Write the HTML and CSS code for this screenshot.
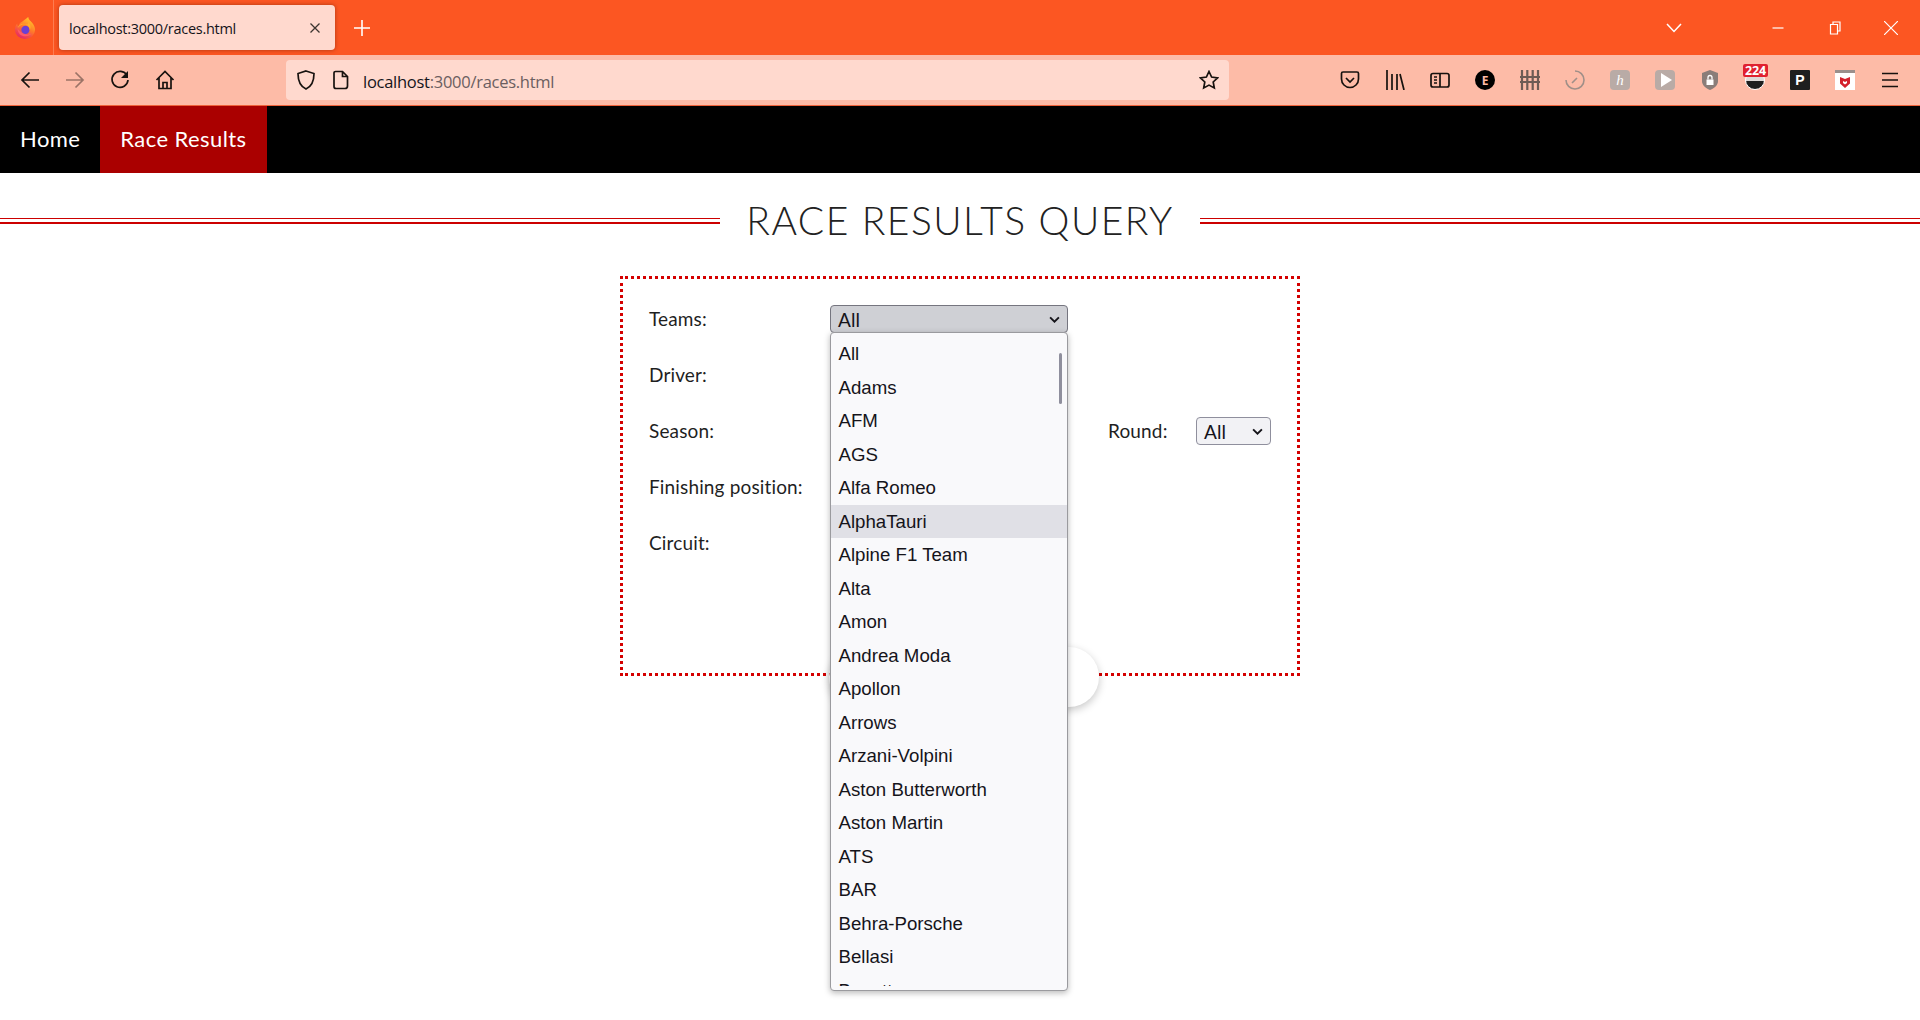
FILE: index.html
```html
<!DOCTYPE html>
<html lang="en">
<head>
<meta charset="utf-8">
<title>Race Results Query</title>
<link rel="stylesheet" href="styles.css">
</head>
<body>
<header class="browser">
  <div class="tabstrip">
    <div class="ff-box">
      <svg class="ff-logo" viewBox="0 0 24 24" width="22" height="22"><defs><linearGradient id="ffg" x1=".8" y1="0" x2=".3" y2="1"><stop offset="0" stop-color="#ffd02a"/><stop offset=".5" stop-color="#ff7a2a"/><stop offset="1" stop-color="#e5236a"/></linearGradient></defs><path d="M15.500 0c.3 3 2.500 4 4.500 6.500 2 2.500 3 5 3 7.500a11 10 0 1 1-22 0c0-3 1-5.500 2.500-7 0 1.500.5 2.500 1.500 3 .5-4 5-5 10.500-10z" fill="url(#ffg)"/><circle cx="12.500" cy="14" r="4.500" fill="#6b3fd4"/><path d="M4 12c1-3 4-5 7-4.500 4 .5 6.500 3.500 6 7 2-3 1-7-2-9 1 2 .5 3-1 2.500-3-1-7 0-10 4z" fill="#ffb02a"/><path d="M4 13c0 5 4 8 8.500 8 3 0 5-1 6.500-3-3 1.500-7 1.500-10-.5-2-1.500-3.500-3-5-4.500z" fill="#ff5a6a"/></svg>
    </div>
    <div class="tab">
      <span class="tab-title">localhost:3000/races.html</span>
      <svg class="tab-close" viewBox="0 0 12 12" width="12" height="12"><path d="M1.500 1.500l9 9M10.500 1.500l-9 9"/></svg>
    </div>
    <svg class="newtab" viewBox="0 0 16 16" width="16" height="16"><path d="M8 0v16M0 8h16"/></svg>
    <div class="window-controls">
      <svg class="win tabs-list" viewBox="0 0 16 10" width="16" height="10"><path d="M1 1l7 7.500L15 1"/></svg>
      <svg class="win minimize" viewBox="0 0 12 12" width="12" height="12"><path d="M.5 6h11"/></svg>
      <svg class="win restore" viewBox="0 0 12 14" width="12" height="14"><path d="M4 3V1h7v9H8.500M1.500 3.500h7v9.500h-7z"/></svg>
      <svg class="win close" viewBox="0 0 14 14" width="14" height="14"><path d="M0 0l14 14M14 0L0 14"/></svg>
    </div>
  </div>

  <div class="toolbar">
    <div class="btn-group">
      <span class="tool"><svg class="ico" viewBox="0 0 20 20"><path d="M19 10H2M9.500 2.500L2 10l7.500 7.500"/></svg></span>
      <span class="tool dim"><svg class="ico" viewBox="0 0 20 20"><path d="M1 10h17M10.500 2.500L18 10l-7.500 7.500"/></svg></span>
      <span class="tool"><svg class="ico" viewBox="0 0 20 20"><path d="M17 5.500A8 8 0 1 0 18 10"/><path class="fill" d="M18 1v7h-7z"/></svg></span>
      <span class="tool"><svg class="ico" viewBox="0 0 20 20"><path d="M1.500 10L10 1.500 18.500 10M4 8v10.500h12V8M8 18.500V12.500h4v6"/></svg></span>
    </div>
    <div class="urlbar">
      <svg class="ico shield" viewBox="0 0 20 20"><path d="M10 1l8 2.500c0 8-2.500 13-8 15.500C4.500 16.500 2 11.500 2 3.500z"/></svg>
      <svg class="ico doc" viewBox="0 0 20 20"><path d="M4.500 1.500h7l5 5V16a2.500 2.500 0 0 1-2.500 2.500H5A2 2 0 0 1 3 16.500V3a1.500 1.500 0 0 1 1.500-1.500zM11.500 1.500v5h5"/></svg>
      <span class="url"><span class="host">localhost</span>:3000/races.html</span>
      <svg class="ico star" viewBox="0 0 20 20"><path d="M10 1.500l2.600 5.500 6 .8-4.400 4.200 1.100 6L10 15.100 4.700 18l1.100-6L1.400 7.800l6-.8z"/></svg>
    </div>
    <div class="btn-group extensions">
      <span class="tool"><svg class="ico" viewBox="0 0 20 20"><path d="M3 2h14a1.500 1.500 0 0 1 1.500 1.500V9a8.500 8.500 0 0 1-17 0V3.500A1.500 1.500 0 0 1 3 2zM6 8l4 4 4-4"/></svg></span>
      <span class="tool"><svg class="ico" viewBox="0 0 20 20"><path d="M2 0v20M7 4v16M12 4v16M15 4l4 16"/></svg></span>
      <span class="tool"><svg class="ico" viewBox="0 0 20 20"><rect x="1" y="3.500" width="18" height="13.500" rx="2"/><path d="M10 3.500V17M4 7h3M4 10h3M4 13h3"/></svg></span>
      <span class="tool"><span class="ext-e">E</span></span>
      <span class="tool"><svg class="ico fence" viewBox="0 0 20 20"><path d="M2 0v20M7.300 0v20M12.700 0v20M18 0v20M0 7h20M0 12h20"/></svg></span>
      <span class="tool"><svg class="ico timer" viewBox="0 0 20 20"><path d="M10 1a9 9 0 1 1-9 9M7 13l5-5"/></svg></span>
      <span class="tool"><span class="ext-k">h</span></span>
      <span class="tool"><span class="ext-play"><svg viewBox="0 0 12 14" width="12" height="14"><path d="M1 0l11 7-11 7z"/></svg></span></span>
      <span class="tool"><svg viewBox="0 0 20 20" width="20" height="20"><path class="lock-shield" d="M10 0l8 3v8c0 4-3 7-8 9-5-2-8-5-8-9V3z"/><path class="lock-body" d="M6.500 9.500h7V15h-7z"/><path class="lock-arc" d="M8 9.500V7.500a2 2 0 0 1 4 0v2"/></svg></span>
      <span class="tool"><span class="ext-count"><span class="badge">224</span></span></span>
      <span class="tool"><span class="ext-p">P</span></span>
      <span class="tool"><span class="ext-mc"><svg viewBox="0 0 12 12" width="12" height="12"><path d="M1 1l5 2 5-2v6.500L6 12 1 7.500z"/><path class="mc-cut" d="M4 5l2 1 2-1v2L6 8.500 4 7z"/></svg></span></span>
      <span class="tool"><svg class="ico" viewBox="0 0 20 20"><path d="M2 3.500h16M2 10h16M2 16.500h16"/></svg></span>
    </div>
  </div>
</header>

<nav class="sitenav">
  <a class="navlink" href="#">Home</a>
  <a class="navlink active" href="#">Race Results</a>
</nav>

<main>
  <div class="title-row">
    <span class="rule"></span>
    <h1>RACE RESULTS QUERY</h1>
    <span class="rule"></span>
  </div>

  <form class="query">
    <div class="row">
      <span class="label">Teams:</span>
      <div class="select-wrap">
        <div class="select open">All<svg class="chev" viewBox="0 0 10 6" width="11" height="7"><path d="M1 1l4 4 4-4"/></svg></div>
        <div class="dropdown">
          <ul class="options">
            <li>All</li><li>Adams</li><li>AFM</li><li>AGS</li><li>Alfa Romeo</li>
            <li class="hover">AlphaTauri</li><li>Alpine F1 Team</li><li>Alta</li><li>Amon</li>
            <li>Andrea Moda</li><li>Apollon</li><li>Arrows</li><li>Arzani-Volpini</li>
            <li>Aston Butterworth</li><li>Aston Martin</li><li>ATS</li><li>BAR</li>
            <li>Behra-Porsche</li><li>Bellasi</li><li>Benetton</li>
          </ul>
          <span class="thumb"></span>
        </div>
      </div>
    </div>
    <div class="row"><span class="label">Driver:</span></div>
    <div class="row">
      <span class="label">Season:</span>
      <span class="select-gap"></span>
      <span class="label-round">Round:</span>
      <div class="select small">All<svg class="chev" viewBox="0 0 10 6" width="11" height="7"><path d="M1 1l4 4 4-4"/></svg></div>
    </div>
    <div class="row"><span class="label">Finishing position:</span></div>
    <div class="row"><span class="label">Circuit:</span></div>
    <span class="submit"></span>
  </form>
</main>
</body>
</html>
```

FILE: styles.css
```css
* { box-sizing: border-box; }
html, body { margin: 0; height: 100%; overflow: hidden; background: #fff; }
body { font-family: "Lato", "Liberation Sans", sans-serif; color: #1f1f1f; }

/* Browser chrome */
.browser { font-family: "Open Sans", "Noto Sans", sans-serif; }
.tabstrip { height: 55px; background: #fc5622; display: flex; align-items: flex-start; }
.ff-box { width: 54px; height: 55px; border-right: 1px solid #fd7c50; display: flex; align-items: center; justify-content: center; padding-right: 4px; }
.tab { width: 276px; height: 45px; margin: 5px 0 0 5px; padding: 2px 12px 0 10px; background: #ffd9ce; border-radius: 4px; box-shadow: 0 0 4px rgba(90, 20, 0, .5); display: flex; align-items: center; justify-content: space-between; }
.tab-title { font-size: 14.500px; letter-spacing: -.28px; color: #15141a; }
.tab-close { stroke: #3c3530; stroke-width: 1.300; fill: none; margin: -2px 2px 0 0; }
.newtab { stroke: #fff; stroke-width: 1.600; fill: none; margin: 20px 0 0 19px; }
.window-controls { margin-left: auto; height: 55px; display: flex; align-items: center; padding-right: 22px; }
.win { stroke: #fff; stroke-width: 1.200; fill: none; }
.tabs-list { margin-right: 90px; stroke-width: 1.500; }
.restore { margin: 0 43px 0 45px; }

.toolbar { height: 51px; background: #fdbba7; border-bottom: 1px solid #f0623a; display: flex; align-items: center; padding: 0 7.500px 0 7px; }
.btn-group { display: flex; }
.extensions { margin-left: auto; }
.tool { width: 45px; height: 40px; display: flex; align-items: center; justify-content: center; position: relative; }
.tool.dim { opacity: .42; }
.ico { width: 20px; height: 20px; fill: none; stroke: #17120f; stroke-width: 1.700; flex: none; }
.ico .fill { fill: #17120f; stroke: none; }
.fence { stroke: #6f5b54; stroke-width: 2.200; }
.timer { stroke: #a08f88; stroke-width: 1.600; }
.urlbar { width: 943px; height: 40px; margin-left: 99px; background: #ffd9ce; border-radius: 4px; display: flex; align-items: center; padding: 0 10px 0 10px; }
.shield { margin-right: 15px; }
.doc { margin-right: 12px; }
.url { font-size: 16.500px; letter-spacing: -.27px; color: #6b5e60; padding-top: 2px; }
.host { color: #15141a; }
.star { margin-left: auto; margin-right: 0; }

.ext-e { width: 20px; height: 20px; border-radius: 50%; background: #000; color: #fdbba7; font-size: 12px; font-weight: 700; display: flex; align-items: center; justify-content: center; }
.ext-k { width: 20px; height: 20px; border-radius: 4px; background: #b9aba6; color: #fff; font: italic 15px "Liberation Serif", serif; display: flex; align-items: center; justify-content: center; }
.ext-play { width: 20px; height: 20px; border-radius: 4px; background: #b9aba6; display: flex; align-items: center; justify-content: center; fill: #fff; padding-left: 2px; }
.lock-shield { fill: #8a7d79; }
.lock-body { fill: #fff; }
.lock-arc { fill: none; stroke: #fff; stroke-width: 1.300; }
.ext-count { width: 20px; height: 20px; margin-top: 0; border-radius: 50%; background: linear-gradient(#ded9d7 58%, #1e1e1e 58%); border: 1px solid #fff; }
.badge { position: absolute; left: 10.500px; top: 4px; width: 25px; height: 13px; background: #e0212f; border-radius: 2px; color: #fff; font: 700 12.500px/13px "Open Sans", sans-serif; text-align: center; letter-spacing: -.1px; }
.ext-p { width: 20px; height: 20px; border-radius: 1px; background: #1f1f1f; color: #fff; font: 700 14px "Liberation Sans", sans-serif; display: flex; align-items: center; justify-content: center; }
.ext-mc { width: 20px; height: 20px; background: #fff; border-top: 3px solid #9a8f8c; display: flex; align-items: center; justify-content: center; fill: #d3202c; }
.mc-cut { fill: #fff; }

/* Site nav */
.sitenav { height: 67px; background: #000; display: flex; }
.navlink { color: #fff; text-decoration: none; font-size: 22px; line-height: 65px; height: 67px; padding: 0 20px; letter-spacing: .42px; }
.navlink.active { background: #aa0000; }

/* Title */
.title-row { display: flex; align-items: center; margin-top: 26px; height: 44px; }
.rule { flex: 1; height: 6px; border-top: 1px solid #cc0000; border-bottom: 2px solid #cc0000; }
h1 { margin: 0 26px; padding-bottom: 2px; font-size: 39px; font-weight: 300; color: #222; letter-spacing: 1.450px; line-height: 42px; }

/* Form */
.query { position: relative; width: 680px; height: 400px; margin: 33px 0 0 620px; border: 3px dotted #d40000; padding: 26px 0 0 26px; display: flex; flex-direction: column; gap: 28px; }
.row { display: flex; align-items: center; height: 28px; font-size: 19px; letter-spacing: .15px; }
.label { width: 181px; flex: none; padding-bottom: 1px; }
.select-gap { width: 238px; flex: none; }
.label-round { margin-left: 40px; width: 88px; flex: none; padding-bottom: 1px; }
.select-wrap { position: relative; width: 238px; z-index: 2; }
.select { height: 28px; border: 1px solid #8f8f9d; border-radius: 4px; background: #fafafc; padding: 0 7px 0 7px; display: flex; align-items: center; justify-content: space-between; font-size: 19px; color: #15141a; }
.select.open { background: #cfd0d5; border-color: #75757f; }
.select.small { width: 75px; background: #f2f2f5; }
.chev { fill: none; stroke: #15141a; stroke-width: 1.700; }

.dropdown { position: absolute; top: 27px; left: 0; width: 238px; height: 659px; background: #f9f9fb; border: 1px solid #9a9a9e; border-radius: 4px; padding: 4px 0; box-shadow: 0 2px 6px rgba(0, 0, 0, .28); }
.options { list-style: none; margin: 0; padding: 0; height: 649px; overflow: hidden; font-family: "Liberation Sans", Arial, sans-serif; font-size: 18.670px; letter-spacing: 0; color: #15141a; }
.options li { height: 33.500px; line-height: 34px; padding-left: 7.500px; }
.options li.hover { background: #e0e0e6; }
.thumb { position: absolute; right: 5px; top: 20px; width: 3px; height: 51px; border-radius: 2px; background: #8f8f9d; }

.submit { position: absolute; right: 198px; bottom: -34px; width: 270px; height: 60px; border-radius: 30px; background: #fff; box-shadow: 0 3px 8px rgba(0, 0, 0, .22); z-index: 1; }
```
